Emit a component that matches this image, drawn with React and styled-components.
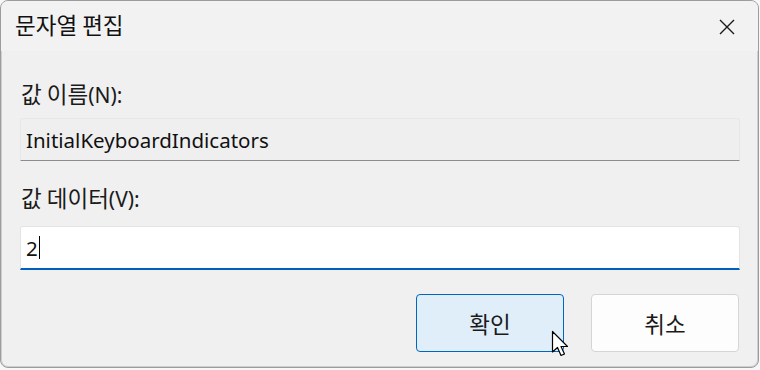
import React from "react";
import styled, { createGlobalStyle } from "styled-components";

const Global = createGlobalStyle`
  html, body { margin: 0; padding: 0; background: #f7f7f7; }
  body { font-family: "Noto Sans", "Noto Sans CJK KR", sans-serif; color: #1a1a1a; }
  * { box-sizing: border-box; }
`;

const Window = styled.div`
  position: relative;
  width: 759px;
  height: 368px;
  border: 1px solid #9c9c9c;
  box-shadow: 0 0 0 1px #cfcfcf inset;
  border-radius: 8px;
  background: #f0f0f0;
  overflow: hidden;
  display: flex;
  flex-direction: column;
`;

const TitleBar = styled.div`
  height: 50px;
  flex: none;
  display: flex;
  align-items: center;
  justify-content: space-between;
  padding: 0 23px 0 14px;
  background: #f2f2f2;
`;

const Ko = styled.span`
  font-family: "Noto Sans CJK KR", sans-serif;
  font-size: 22.5px;
`;

const Title = styled.div`
  font-size: 20px;
  line-height: 26px;
  margin-top: -1px;
  color: #111;
`;

const CloseBtn = styled.button`
  width: 16px;
  height: 16px;
  padding: 0;
  border: 0;
  background: none;
  display: flex;
  margin-top: 2px;
`;

const Body = styled.div`
  flex: 1;
  display: flex;
  flex-direction: column;
  padding: 29px 18px 0 19px;
`;

const Label = styled.div`
  height: 26px;
  display: flex;
  align-items: baseline;
  font-size: 21px;
  line-height: 26px;
  color: #1b1b1b;
  padding-left: 1px;
  margin-bottom: ${(p) => p.$gap}px;
`;

const Field = styled.div`
  height: ${(p) => p.$h}px;
  display: flex;
  align-items: center;
  padding-left: 5px;
  font-size: 20.5px;
  color: #111;
  background: ${(p) => (p.$active ? "#ffffff" : "#efefef")};
  border: 1px solid ${(p) => (p.$active ? "#e4e4e4" : "#e6e6e6")};
  border-bottom: ${(p) => (p.$active ? "2px solid #005fb8" : "1px solid #8c8c8c")};
  border-radius: 3px 3px 0 0;
  margin-bottom: ${(p) => p.$gap}px;
`;

const Caret = styled.span`
  display: inline-block;
  width: 1px;
  height: 23px;
  background: #000;
  margin-left: 1px;
`;

const Buttons = styled.div`
  display: flex;
  justify-content: flex-end;
  gap: 27px;
  padding-right: 1px;
`;

const Button = styled.button`
  width: 148px;
  height: 58px;
  border-radius: 4px;
  font-family: inherit;
  color: #1a1a1a;
  background: ${(p) => (p.$primary ? "#e0eef9" : "#fdfdfd")};
  border: 1px solid ${(p) => (p.$primary ? "#0067c0" : "#d5d5d5")};
  padding: 0;
`;

const Cursor = styled.svg`
  position: absolute;
  left: 550px;
  top: 329px;
  pointer-events: none;
`;

export default function App() {
  return (
    <>
      <Global />
      <Window>
        <TitleBar>
          <Title><Ko>문자열 편집</Ko></Title>
          <CloseBtn aria-label="닫기">
            <svg width="16" height="16" viewBox="0 0 16 16">
              <path d="M1 1 L15 15 M15 1 L1 15" stroke="#1a1a1a" strokeWidth="1.4" fill="none" />
            </svg>
          </CloseBtn>
        </TitleBar>
        <Body>
          <Label $gap={12}><Ko>값 이름</Ko>(N):</Label>
          <Field $h={43} $gap={23}>InitialKeyboardIndicators</Field>
          <Label $gap={16}><Ko>값 데이터</Ko>(V):</Label>
          <Field $h={44} $gap={24} $active>
            2<Caret />
          </Field>
          <Buttons>
            <Button $primary><Ko>확인</Ko></Button>
            <Button><Ko>취소</Ko></Button>
          </Buttons>
        </Body>
        <Cursor width="20" height="30" viewBox="0 0 20 30">
          <path
            d="M1.5 1.5 L1.5 22 L6.5 17.5 L10 25.5 L13.5 24 L10 16.5 L16.5 16.5 Z"
            fill="#ffffff"
            stroke="#000"
            strokeWidth="1.2"
            strokeLinejoin="round"
          />
        </Cursor>
      </Window>
    </>
  );
}
